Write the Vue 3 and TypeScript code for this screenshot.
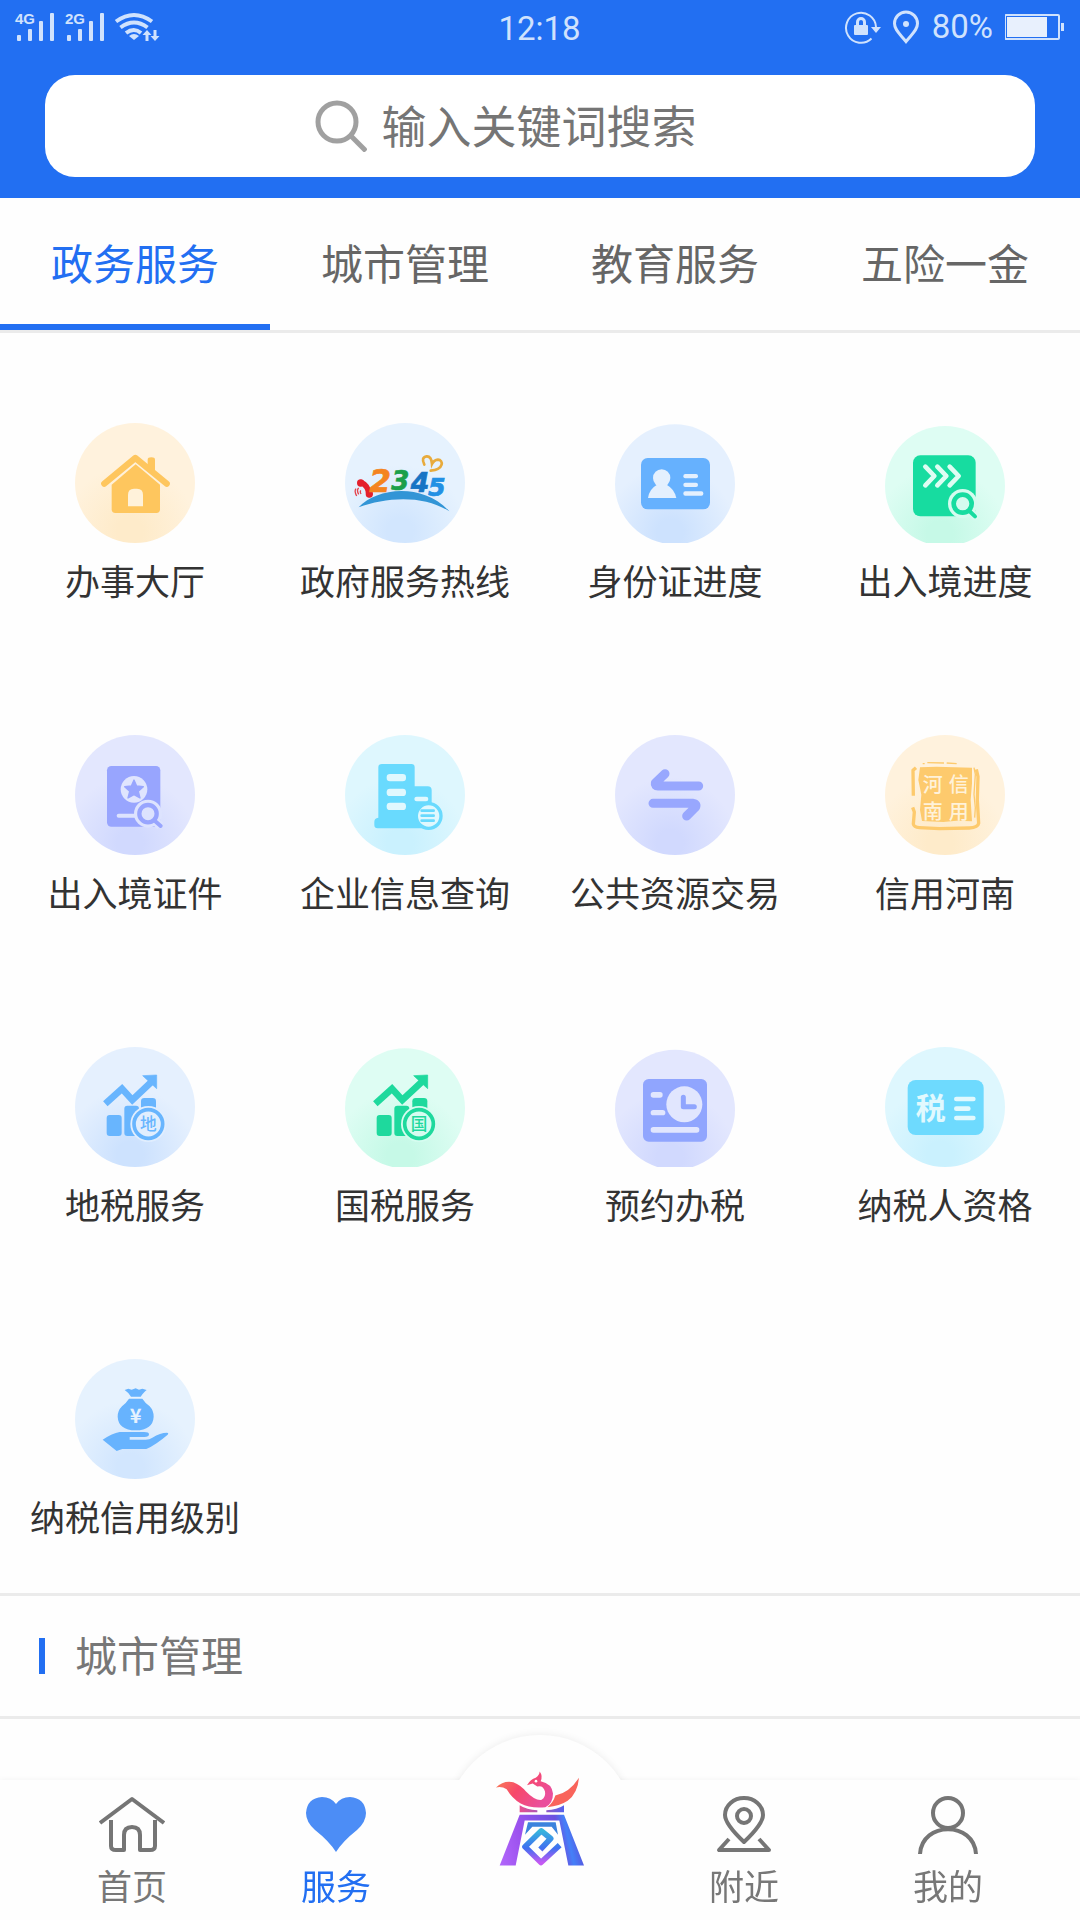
<script setup lang="ts">
import { ref } from 'vue'

interface Service {
  label: string
  icon: string
  tint: string
  box: string
  cy: number
}

interface NavItem {
  label: string
  icon: string
}

const tabs: string[] = ['政务服务', '城市管理', '教育服务', '五险一金']
const activeTab = ref('政务服务')
const activeNav = ref('服务')
const keyword = ref('')

// Icon artwork is drawn on a 360-unit canvas; cy is the centre of the round backdrop.
const services: Service[] = [
  { label: '办事大厅', icon: 'house', tint: 'amber', box: '75 68 360 360', cy: 248 },
  { label: '政府服务热线', icon: 'hotline', tint: 'sky', box: '885 68 360 360', cy: 248 },
  { label: '身份证进度', icon: 'idcard', tint: 'blue', box: '75 68 360 360', cy: 252 },
  { label: '出入境进度', icon: 'progress', tint: 'green', box: '885 68 360 360', cy: 257 },
  { label: '出入境证件', icon: 'permit', tint: 'violet', box: '75 45 360 360', cy: 225 },
  { label: '企业信息查询', icon: 'company', tint: 'cyan', box: '885 45 360 360', cy: 225 },
  { label: '公共资源交易', icon: 'exchange', tint: 'violet', box: '75 45 360 360', cy: 225 },
  { label: '信用河南', icon: 'seal', tint: 'amber', box: '885 45 360 360', cy: 225 },
  { label: '地税服务', icon: 'local', tint: 'blue', box: '75 51 360 360', cy: 231 },
  { label: '国税服务', icon: 'state', tint: 'green', box: '885 51 360 360', cy: 235 },
  { label: '预约办税', icon: 'booking', tint: 'violet', box: '75 51 360 360', cy: 239 },
  { label: '纳税人资格', icon: 'taxpayer', tint: 'cyan', box: '885 51 360 360', cy: 231 },
  { label: '纳税信用级别', icon: 'credit', tint: 'sky', box: '225 57 360 360', cy: 237 },
]

const tints = [
  { name: 'amber', edge: '#fff2dd', glow: '#feebca' },
  { name: 'sky', edge: '#e6f2fe', glow: '#d2e6fe' },
  { name: 'blue', edge: '#e5f0fe', glow: '#cde2fe' },
  { name: 'green', edge: '#defdf3', glow: '#c6f9e7' },
  { name: 'violet', edge: '#e3e7fe', glow: '#d1d9fe' },
  { name: 'cyan', edge: '#def7fe', glow: '#caf1fe' },
]

const navItems: NavItem[] = [
  { label: '首页', icon: 'home' },
  { label: '服务', icon: 'heart' },
  { label: '', icon: 'logo' },
  { label: '附近', icon: 'nearby' },
  { label: '我的', icon: 'me' },
]

const discX = (box: string): number => Number(box.split(' ')[0]) + 180
</script>

<template>
  <div class="page">
    <svg class="defs" aria-hidden="true">
      <defs>
        <radialGradient v-for="t in tints" :id="'tint-' + t.name" :key="t.name" cx="0.46" cy="0.9" r="0.55">
          <stop offset="0" :stop-color="t.glow" />
          <stop offset="0.2" :stop-color="t.glow" />
          <stop offset="1" :stop-color="t.edge" />
        </radialGradient>
      </defs>
    </svg>

    <header class="top">
      <div class="status">
        <div class="status-left">
          <svg width="150" height="36" viewBox="14 9 150 36">
            <g fill="#d0e2fd">
              <text class="net" x="15" y="24">4G</text>
              <rect x="17" y="35" width="4" height="6" rx="1" />
              <rect x="28" y="29" width="4" height="12" rx="1" />
              <rect x="39" y="21" width="4" height="20" rx="1" />
              <rect x="50" y="13" width="4" height="28" rx="1" />
              <text class="net" x="65" y="24">2G</text>
              <rect x="67" y="35" width="4" height="6" rx="1" />
              <rect x="78" y="29" width="4" height="12" rx="1" />
              <rect x="89" y="21" width="4" height="20" rx="1" />
              <rect x="100" y="13" width="4" height="28" rx="1" />
              <path d="M134 40l-5-4q5-4 10 0z" />
              <path d="M147 30l4.500 5h-3v6h-3v-6h-3zM155 41l4.500-5h-3v-6h-3v6h-3z" />
            </g>
            <g fill="none" stroke="#d0e2fd" stroke-width="4">
              <path d="M116 21.500q18-13 36 0" />
              <path d="M120.500 27.500q13.500-10 27 0" />
              <path d="M126 33q8-6 15 0" />
            </g>
          </svg>
        </div>
        <time>12:18</time>
        <div class="status-right">
          <svg width="76" height="36" viewBox="844 9 76 36">
            <g fill="none" stroke="#d0e2fd" stroke-width="2">
              <path d="M871.500 38.500A15 15 0 1 1 876 27" />
              <path stroke-width="3" d="M857.500 27v-5a3.500 3.500 0 0 1 7 0v5" />
              <path stroke-width="3" d="M906 41.500C900 34 894.500 30 894.500 23.500a11.500 11.500 0 0 1 23 0C917.500 30 912 34 906 41.500z" />
            </g>
            <rect x="854" y="25" width="14" height="10" rx="1" fill="#d0e2fd" />
            <path d="M871 27h10l-5 6z" fill="#d0e2fd" />
            <circle cx="906" cy="24" r="3" fill="#d0e2fd" />
          </svg>
          <span class="percent">80%</span>
          <svg width="60" height="36" viewBox="1005 9 60 36">
            <rect x="1005" y="15" width="54" height="24" rx="1" fill="none" stroke="#d0e2fd" stroke-width="2" />
            <rect x="1007" y="17" width="40" height="20" fill="#e8f0fd" />
            <rect x="1061" y="23" width="3" height="8" fill="#d0e2fd" />
          </svg>
        </div>
      </div>

      <form class="search" role="search" @submit.prevent>
        <label for="keyword" aria-label="搜索">
          <svg width="52" height="52" viewBox="0 0 52 52" fill="none" stroke="#a0a0a0" stroke-width="5">
            <circle cx="22" cy="22" r="19" />
            <path d="M36 36l15 15" />
          </svg>
        </label>
        <input id="keyword" v-model="keyword" type="text" placeholder="输入关键词搜索" />
      </form>
    </header>

    <nav class="tabs">
      <button
        v-for="tab in tabs"
        :key="tab"
        type="button"
        :class="{ active: tab === activeTab }"
        @click="activeTab = tab"
      >{{ tab }}</button>
    </nav>

    <main>
      <div class="grid">
        <a v-for="s in services" :key="s.label" class="service" href="#">
          <svg width="120" height="120" :viewBox="s.box" aria-hidden="true">
            <circle :cx="discX(s.box)" :cy="s.cy" r="180" :fill="`url(#tint-${s.tint})`" />

            <g v-if="s.icon === 'house'">
              <path d="M163 250L256 173L350 250" fill="none" stroke="#fec65e" stroke-width="19" stroke-linecap="round" stroke-linejoin="round" />
              <path d="M293 190v-12q0-7 11-7t11 7v44l-22-18z" fill="#fec65e" />
              <path d="M257 192L330 253V327q0 11-11 11H196q-11 0-11-11V253z" fill="#fec65e" />
              <path d="M234 318v-34q0-19 18-19h9q18 0 18 19v34z" fill="#fff2da" />
            </g>

            <g v-else-if="s.icon === 'hotline'">
              <path d="M934 247q20 8 23 35" fill="none" stroke="#e41f2c" stroke-width="17" stroke-linecap="round" />
              <circle cx="932" cy="248" r="11" fill="#e41f2c" />
              <circle cx="958" cy="281" r="11" fill="#e41f2c" />
              <path d="M926 263q-7 6 0 19M918 265q-6 7 2 22M932 270q-3 5 1 11" fill="none" stroke="#e4424c" stroke-width="4" />
              <g class="digit">
                <text x="958" y="276" font-size="94" fill="#f48420" stroke="#f48420">2</text>
                <text x="1024" y="269" font-size="78" fill="#1a9f4b" stroke="#1a9f4b">3</text>
                <text x="1082" y="276" font-size="80" fill="#1774c4" stroke="#1774c4">4</text>
                <text x="1134" y="287" font-size="76" fill="#2290e4" stroke="#2290e4">5</text>
              </g>
              <path d="M1142 211C1184 207 1180 178 1164 178q-12 1-18 13-2-24-16-23-18 3-7 25" fill="none" stroke="#e8ab3c" stroke-width="8" stroke-linecap="round" />
              <path d="M926 321C980 262 1118 246 1198 333C1120 283 1010 290 926 321z" fill="#3295d6" />
            </g>

            <g v-else-if="s.icon === 'idcard'">
              <rect x="153" y="173" width="207" height="154" rx="20" fill="#66b1fe" />
              <g fill="#e4f0fe">
                <circle cx="215" cy="233" r="26" />
                <path d="M174 293q4-27 26-39h31q22 12 28 39z" />
                <rect x="280" y="221" width="44" height="13" rx="6" />
                <rect x="280" y="247" width="44" height="13" rx="6" />
                <rect x="280" y="273" width="60" height="13" rx="6" />
              </g>
            </g>

            <g v-else-if="s.icon === 'progress'">
              <rect x="969" y="165" width="188" height="183" rx="22" fill="#17dca0" />
              <path d="M1006 199l27 28-27 28M1042 199l27 28-27 28M1079 199l27 28-27 28" fill="none" stroke="#defdf3" stroke-width="14" stroke-linecap="round" stroke-linejoin="round" />
              <circle cx="1118" cy="310" r="44" fill="#d5fbef" />
              <path d="M1138 332l17 16" stroke="#d5fbef" stroke-width="24" stroke-linecap="round" />
              <circle cx="1118" cy="310" r="27" fill="#d5fbef" stroke="#17dca0" stroke-width="14" />
              <path d="M1138 332l17 16" stroke="#17dca0" stroke-width="12" stroke-linecap="round" />
            </g>

            <g v-else-if="s.icon === 'permit'">
              <rect x="171" y="138" width="160" height="182" rx="13" fill="#98a5fe" />
              <circle cx="252" cy="208" r="40" fill="#e0e5fe" />
              <path d="M252 180l8 18 20 2-15 14 5 20-18-10-18 10 5-20-15-14 20-2z" fill="#98a5fe" stroke="#98a5fe" stroke-width="4" stroke-linejoin="round" />
              <path d="M206 287h60" stroke="#dde3fe" stroke-width="12" stroke-linecap="round" />
              <circle cx="294" cy="281" r="42" fill="#dde3fe" />
              <path d="M314 302l17 16" stroke="#dde3fe" stroke-width="26" />
              <circle cx="294" cy="281" r="26" fill="#dde3fe" stroke="#98a5fe" stroke-width="13" />
              <path d="M315 303l17 15" stroke="#98a5fe" stroke-width="12" stroke-linecap="round" />
            </g>

            <g v-else-if="s.icon === 'company'">
              <path d="M996 132h88q10 0 10 10v57h39q12 0 12 12v114H983q-10 0-10-10v-10q0-10 12-12V142q0-10 11-10z" fill="#69dafe" />
              <g fill="#e0f8fe">
                <rect x="1010" y="162" width="58" height="22" rx="10" />
                <rect x="1010" y="206" width="58" height="22" rx="10" />
                <rect x="1010" y="248" width="58" height="22" rx="10" />
                <rect x="1093" y="230" width="42" height="14" rx="7" />
              </g>
              <circle cx="1136" cy="288" r="37" fill="#e0f8fe" stroke="#69dafe" stroke-width="10" />
              <path d="M1115 272h36M1115 287h36M1115 302h36" stroke="#69dafe" stroke-width="8" stroke-linecap="round" />
            </g>

            <g v-else-if="s.icon === 'exchange'" fill="none" stroke="#98a7fe" stroke-width="27" stroke-linecap="round" stroke-linejoin="round">
              <path d="M225 161L196 189Q194 198 204 198H326" />
              <path d="M189 250H310Q322 252 316 262L290 288" />
            </g>

            <g v-else-if="s.icon === 'seal'">
              <path d="M990 142L1040 140 1146 143 1146 190 1142 240 1146 304 1100 302 1060 306 996 303 990 270 994 224 985 180z" fill="#fdca6d" />
              <path d="M978 143l-9 8 1 76M968 262l5 14-3 36q2 10 18 11l60 3 90-2q26-1 28-14l-4-70 2-70-5-22" fill="none" stroke="#fdca6d" stroke-width="10" stroke-linejoin="round" />
              <path d="M998 131h6M1012 128l50 1M1070 129l30 2M1152 143l4 20-4 60 4 40-2 30" fill="none" stroke="#fdca6d" stroke-width="4" />
              <g class="seal-text">
                <text x="998" y="215">河</text>
                <text x="1076" y="215">信</text>
                <text x="998" y="297">南</text>
                <text x="1076" y="297">用</text>
              </g>
            </g>

            <g v-else-if="s.icon === 'local'" fill="#68b5fe">
              <path d="M166 221L216 176 247 210 304 156" fill="none" stroke="#68b5fe" stroke-width="20" />
              <path d="M278 137l42-2v41z" stroke="#68b5fe" stroke-width="2" />
              <rect x="170" y="255" width="45" height="63" rx="9" />
              <rect x="223" y="227" width="44" height="91" rx="9" />
              <rect x="273" y="204" width="45" height="80" rx="10" />
              <circle cx="295" cy="282" r="54" fill="#e1eefe" />
              <circle cx="295" cy="282" r="43" fill="#e1eefe" stroke="#68b5fe" stroke-width="11" />
              <text class="coin-text" x="295" y="300">地</text>
            </g>

            <g v-else-if="s.icon === 'state'" fill="#1ed99d">
              <path d="M976 221L1026 176 1057 210 1115 156" fill="none" stroke="#1ed99d" stroke-width="20" />
              <path d="M1091 137l42-2v41z" stroke="#1ed99d" stroke-width="2" />
              <rect x="980" y="255" width="45" height="63" rx="9" />
              <rect x="1033" y="227" width="45" height="91" rx="9" />
              <rect x="1087" y="204" width="45" height="80" rx="10" />
              <circle cx="1107" cy="282" r="54" fill="#d6fcf0" />
              <circle cx="1107" cy="282" r="43" fill="#d6fcf0" stroke="#1ed99d" stroke-width="11" />
              <text class="coin-text" x="1107" y="300">国</text>
            </g>

            <g v-else-if="s.icon === 'booking'">
              <rect x="159" y="147" width="192" height="188" rx="17" fill="#90a5fe" />
              <g fill="#e1e6fe">
                <rect x="182" y="186" width="36" height="17" rx="8" />
                <rect x="182" y="240" width="44" height="16" rx="8" />
                <rect x="182" y="291" width="146" height="17" rx="8" />
              </g>
              <circle cx="283" cy="223" r="58" fill="#90a5fe" />
              <circle cx="283" cy="223" r="54" fill="#e1e6fe" />
              <path d="M280 202v28h33" fill="none" stroke="#90a5fe" stroke-width="15" stroke-linecap="round" stroke-linejoin="round" />
            </g>

            <g v-else-if="s.icon === 'taxpayer'">
              <rect x="953" y="150" width="228" height="165" rx="24" fill="#6edafe" />
              <text class="card-text" x="977" y="267">税</text>
              <path d="M1099 207h51M1099 236h36M1099 264h51" stroke="#e1f9fe" stroke-width="14" stroke-linecap="round" />
            </g>

            <g v-else fill="#67b3fe">
              <path d="M374 150l11-4 10 3 12-4 10 4 10-3 13 4q-7 5-18 20h-29q-8-13-19-20z" />
              <path d="M387 176h40q7 11 22 23 12 13 12 31-2 40-54 41-52-1-54-41 0-18 13-31 14-12 21-23z" />
              <path d="M308 299q29-19 51-23h73q15 0 15 7 0 8-14 8h-44v8h48q12 0 20-6 24-15 44-15 6 0 2 6-35 30-64 43h-72q-5 1-17 6z" />
              <text class="yuan" x="407" y="249">¥</text>
            </g>
          </svg>
          <span>{{ s.label }}</span>
        </a>
      </div>

      <h2 class="section">城市管理</h2>
    </main>

    <nav class="bottom">
      <ul>
        <li v-for="n in navItems" :key="n.icon">
          <a href="#" :class="{ active: n.label === activeNav }" :aria-label="n.label || '主页'">
            <svg v-if="n.icon === 'logo'" class="logo" width="90" height="97" viewBox="285 210 270 290">
              <defs>
                <linearGradient id="wing" x1="0" y1="0" x2="1" y2="0.5">
                  <stop offset="0" stop-color="#f98a50" />
                  <stop offset="0.5" stop-color="#f7486a" />
                  <stop offset="1" stop-color="#ea4f9c" />
                </linearGradient>
                <linearGradient id="beam" x1="0" y1="0" x2="1" y2="0">
                  <stop offset="0" stop-color="#e8508e" />
                  <stop offset="1" stop-color="#5560ec" />
                </linearGradient>
                <linearGradient id="legs" gradientUnits="userSpaceOnUse" x1="300" y1="495" x2="550" y2="440">
                  <stop offset="0" stop-color="#b267fb" />
                  <stop offset="0.3" stop-color="#9c52ee" />
                  <stop offset="0.75" stop-color="#6a52e0" />
                  <stop offset="0.85" stop-color="#4480f8" />
                  <stop offset="1" stop-color="#5b50dc" />
                </linearGradient>
                <linearGradient id="core" x1="0.5" y1="0" x2="0.5" y2="1">
                  <stop offset="0" stop-color="#36b5dd" />
                  <stop offset="0.55" stop-color="#3f6ff0" />
                  <stop offset="1" stop-color="#c45af3" />
                </linearGradient>
              </defs>
              <path d="M288 262Q310 240 340 246Q363 255 378 274Q405 302 425 299Q438 290 435 274Q429 254 412 259L398 250 381 255Q392 237 407 233Q418 226 419 214Q429 227 422 243Q456 250 459 280Q459 311 436 321Q390 325 362 310Q336 294 320 267Q305 258 288 262z" fill="url(#wing)" />
              <circle cx="408" cy="243" r="4" fill="#fff" />
              <path d="M537 233Q533 280 503 302Q479 318 442 321Q460 307 466 286Q507 279 537 233z" fill="#f9645b" />
              <path d="M359 315Q380 329 412 330V336H359zM492 315Q471 329 439 330V336H492z" fill="url(#beam)" />
              <path d="M359 344H492L552 496H505L478 361H374L347 496H299z" fill="url(#legs)" />
              <path d="M384 366H467L474 404 455 380H397L375 404z" fill="#3b83dd" />
              <path d="M421 448L452 415 424 392 375 440 423 487 479 435" fill="none" stroke="url(#core)" stroke-width="17" stroke-linejoin="round" />
            </svg>
            <template v-else>
              <svg width="66" height="58" viewBox="0 0 66 58" fill="none" stroke="#757575" stroke-width="4">
                <g v-if="n.icon === 'home'" stroke-linejoin="round">
                  <path d="M1 27L33 3 65 27" />
                  <path d="M12 24V50Q12 54 17 54H25V39Q25 31 33 31T41 39V54H51Q56 54 56 50V24" />
                </g>
                <path v-else-if="n.icon === 'heart'" d="M33 56Q26 45 12 34Q3 26 3 17Q4 2 19 1Q28 1 33 8Q38 1 47 1Q62 2 63 17Q63 26 54 34Q40 45 33 56z" fill="#4c8df6" stroke="none" />
                <g v-else-if="n.icon === 'nearby'" stroke-linejoin="round">
                  <path d="M33 46Q14 28 14 19A19 17 0 0 1 52 19Q52 28 33 46z" />
                  <circle cx="33" cy="20" r="7" />
                  <path d="M18 43L8 54H58L48 43" />
                </g>
                <g v-else>
                  <ellipse cx="33" cy="17" rx="15" ry="15" />
                  <path d="M5 58C7 25 59 25 61 58" />
                </g>
              </svg>
              <span>{{ n.label }}</span>
            </template>
          </a>
        </li>
      </ul>
    </nav>
  </div>
</template>

<style>
body {
  margin: 0;
  background: #fefefe;
}
</style>

<style scoped>
.page {
  display: flex;
  flex-direction: column;
  min-height: 100vh;
  font-family: "Noto Sans CJK SC", sans-serif;
  color: #333;
}

.defs {
  position: absolute;
  width: 0;
  height: 0;
}

svg {
  display: block;
  flex: none;
}

a {
  color: inherit;
  text-decoration: none;
}

.top {
  background: #226ff2;
  padding-bottom: 21px;
}

.status {
  display: grid;
  grid-template-columns: 1fr auto 1fr;
  align-items: center;
  height: 54px;
  padding: 0 15px 0 14px;
  font-family: Roboto, sans-serif;
  font-size: 33px;
  line-height: 40px;
  color: #d0e2fd;
}

.status-right {
  display: flex;
  justify-content: flex-end;
  align-items: center;
  gap: 12px;
}

.status time {
  padding-top: 4px;
}

.net {
  font: bold 15px "Liberation Sans", sans-serif;
}

.search {
  display: flex;
  justify-content: center;
  align-items: center;
  gap: 15px;
  height: 102px;
  margin: 21px 45px 0;
  border-radius: 30px;
  background: #fff;
}

.search input {
  width: 384px;
  height: 66px;
  padding: 0 0 4px;
  border: 0;
  outline: 0;
  background: none;
  font: inherit;
  font-size: 45px;
  color: #333;
}

.search input::placeholder {
  color: #757575;
  opacity: 1;
}

.tabs {
  display: grid;
  grid-template-columns: repeat(4, 1fr);
  height: 132px;
  border-bottom: 3px solid #ebebeb;
}

.tabs button {
  padding: 0;
  border: 0;
  border-bottom: 6px solid transparent;
  background: none;
  font: inherit;
  font-size: 42px;
  color: #666;
}

.tabs .active {
  border-color: #226ff2;
  color: #226ff2;
}

.grid {
  display: grid;
  grid-template-columns: repeat(4, 1fr);
  grid-auto-rows: 312px;
  padding-top: 12px;
}

.service {
  display: flex;
  flex-direction: column;
  align-items: center;
  gap: 12px;
  padding-top: 78px;
  font-size: 35px;
  line-height: 50px;
  white-space: nowrap;
}

.digit {
  font-family: "DejaVu Sans", sans-serif;
  font-style: italic;
  font-weight: bold;
  stroke-width: 2px;
}

.seal-text {
  font-size: 60px;
  font-weight: 500;
  fill: #fff2da;
}

.coin-text {
  font-size: 50px;
  font-weight: 500;
  text-anchor: middle;
}

.card-text {
  font-size: 90px;
  font-weight: bold;
  fill: #e1f9fe;
}

.yuan {
  font-size: 60px;
  font-weight: bold;
  text-anchor: middle;
  fill: #e6f2fe;
}

.section {
  display: flex;
  align-items: flex-start;
  gap: 30px;
  height: 120px;
  margin: 0;
  padding-left: 39px;
  border-top: 3px solid #ebebeb;
  border-bottom: 3px solid #ebebeb;
  font-size: 42px;
  font-weight: 400;
  line-height: 116px;
  color: #777;
}

.section::before {
  content: "";
  width: 6px;
  height: 36px;
  margin-top: 42px;
  background: #226ff2;
}

.bottom {
  position: sticky;
  bottom: 0;
  margin-top: auto;
  box-shadow: 0 0 6px rgba(0, 0, 0, 0.05);
}

.bottom::before {
  content: "";
  position: absolute;
  top: -45px;
  left: calc(50% - 95px);
  width: 190px;
  height: 190px;
  border-radius: 50%;
  background: #fefefe;
  box-shadow: 0 0 8px rgba(0, 0, 0, 0.08);
  clip-path: inset(-12px -12px 145px -12px);
}

.bottom ul {
  position: relative;
  display: grid;
  grid-template-columns: repeat(5, 1fr);
  height: 140px;
  margin: 0;
  padding: 0 30px;
  background: #fefefe;
  list-style: none;
}

.bottom a {
  display: flex;
  flex-direction: column;
  align-items: center;
  gap: 8px;
  padding-top: 16px;
  font-size: 35px;
  line-height: 46px;
  color: #777;
}

.bottom .active {
  color: #226ff2;
}

.bottom .logo {
  margin-top: -26px;
}
</style>
